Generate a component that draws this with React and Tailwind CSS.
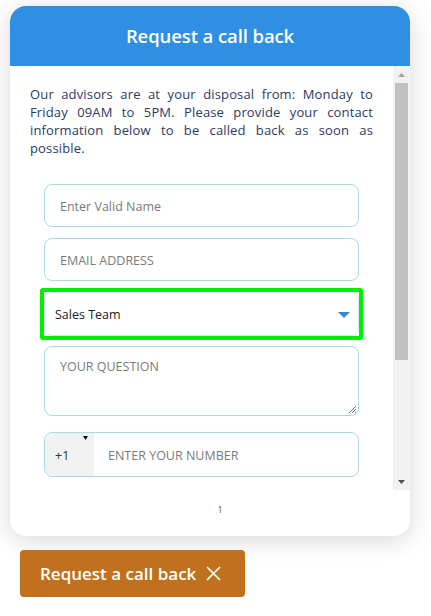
export default function App() {
  const font = { fontFamily: '"Open Sans", "Noto Sans", sans-serif' };
  return (
    <div className="w-[431px] h-[616px] bg-white pt-[6px]" style={font}>
      <div className="ml-[10px] w-[400px] rounded-[16px] bg-white shadow-[0_4px_24px_rgba(0,0,0,0.16)] overflow-hidden">
        <div className="h-[60px] bg-[#2e8fe3] flex items-center justify-center">
          <h2 className="text-white text-[18.5px] font-semibold tracking-[-0.1px]">Request a call back</h2>
        </div>
        <div className="flex h-[424px]">
          <div className="flex-1 overflow-hidden px-5 pt-[19px]">
            <p className="text-[13px] leading-[18px] text-[#2c3a63] text-justify tracking-[0.15px]">
              Our advisors are at your disposal from: Monday to Friday 09AM to 5PM. Please provide your contact information below to be called back as soon as possible.
            </p>
            <div className="mx-[14px] mt-[27px] flex flex-col">
              <div className="h-[43px] rounded-[8px] border border-[#a9d8ea] flex items-center px-[15px] pt-[3px] text-[12.5px] text-[#7a7a7a]">
                Enter Valid Name
              </div>
              <div className="mt-[11px] h-[43px] rounded-[8px] border border-[#a9d8ea] flex items-center px-[15px] pt-[3px] text-[12.5px] text-[#7a7a7a]">
                EMAIL ADDRESS
              </div>
              <div className="mt-[7px] -mx-1 border-4 border-[#00f000] rounded-[3px]">
                <div className="h-[44px] rounded-[8px] border border-[#cfe9f2] flex items-center justify-between pl-[10px] pr-[8px] pt-[2px] text-[12.5px] text-[#222]">
                  <span>Sales Team</span>
                  <svg width="12" height="7" viewBox="0 0 12 7"><path d="M0 0h12L6 6z" fill="#3a86d4" /></svg>
                </div>
              </div>
              <div className="mt-[6px] h-[70px] rounded-[8px] border border-[#a9d8ea] relative px-[15px] pt-[11px] text-[12.5px] text-[#7a7a7a]">
                YOUR QUESTION
                <svg className="absolute right-[1px] bottom-[1px]" width="9" height="9" viewBox="0 0 9 9">
                  <path d="M8 1L1 8M8 4L4 8M8 7L7 8" stroke="#777" strokeWidth="1" />
                </svg>
              </div>
              <div className="mt-[16px] h-[45px] rounded-[8px] border border-[#a9d8ea] flex overflow-hidden text-[12.5px]">
                <div className="w-[49px] bg-[#f1f1f1] relative flex items-center pl-[10px] pt-[3px] text-[#333]">
                  +1
                  <svg className="absolute right-[6px] top-[3px]" width="5" height="4" viewBox="0 0 5 4"><path d="M0 0h5L2.5 4z" fill="#111" /></svg>
                </div>
                <div className="flex items-center pl-[14px] pt-[3px] text-[#7a7a7a]">ENTER YOUR NUMBER</div>
              </div>
              <div className="mt-[14px] h-[44px] rounded-[8px] bg-[#2e8fe3]" />
            </div>
          </div>
          <div className="w-[17px] bg-[#f1f1f1] flex flex-col items-center">
            <div className="h-[17px] flex items-center justify-center">
              <svg width="7" height="4" viewBox="0 0 7 4"><path d="M0 4h7L3.5 0z" fill="#a3a3a3" /></svg>
            </div>
            <div className="w-[13px] h-[277px] bg-[#c1c1c1]" />
            <div className="flex-1" />
            <div className="h-[17px] flex items-center justify-center">
              <svg width="7" height="4" viewBox="0 0 7 4"><path d="M0 0h7L3.5 4z" fill="#505050" /></svg>
            </div>
          </div>
        </div>
        <div className="h-[46px] flex items-start justify-center pl-[20px] pt-[13px] text-[9px] text-[#555]">1</div>
      </div>
      <button className="mt-[14px] ml-[20px] h-[47px] w-[225px] rounded-[4px] bg-[#c1711d] flex items-center pl-[20px] gap-[10px] text-white text-[17px] font-semibold">
        <span>Request a call back</span>
        <svg width="15" height="15" viewBox="0 0 15 15"><path d="M1 1L14 14M14 1L1 14" stroke="#fff" strokeWidth="1.6" /></svg>
      </button>
    </div>
  );
}
